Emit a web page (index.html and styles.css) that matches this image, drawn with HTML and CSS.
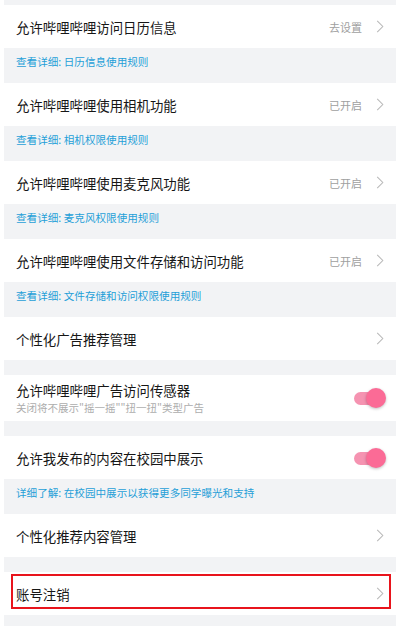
FILE: index.html
```html
<!DOCTYPE html>
<html lang="zh-CN">
<head>
    <meta charset="UTF-8">
    <meta name="viewport" content="width=device-width, initial-scale=1.0">
    <title>隐私权限设置</title>
    <link rel="stylesheet" href="styles.css">
</head>
<body>
    <div class="page">

        <div class="row">
            <span class="title">允许哔哩哔哩访问日历信息</span>
            <span class="status">去设置</span>
            <svg class="arrow" viewBox="0 0 8 14"><path d="M1 1 L7 7 L1 13"/></svg>
        </div>
        <div class="tip">查看详细: 日历信息使用规则</div>

        <div class="row">
            <span class="title">允许哔哩哔哩使用相机功能</span>
            <span class="status">已开启</span>
            <svg class="arrow" viewBox="0 0 8 14"><path d="M1 1 L7 7 L1 13"/></svg>
        </div>
        <div class="tip">查看详细: 相机权限使用规则</div>

        <div class="row">
            <span class="title">允许哔哩哔哩使用麦克风功能</span>
            <span class="status">已开启</span>
            <svg class="arrow" viewBox="0 0 8 14"><path d="M1 1 L7 7 L1 13"/></svg>
        </div>
        <div class="tip">查看详细: 麦克风权限使用规则</div>

        <div class="row">
            <span class="title">允许哔哩哔哩使用文件存储和访问功能</span>
            <span class="status">已开启</span>
            <svg class="arrow" viewBox="0 0 8 14"><path d="M1 1 L7 7 L1 13"/></svg>
        </div>
        <div class="tip">查看详细: 文件存储和访问权限使用规则</div>

        <div class="row">
            <span class="title">个性化广告推荐管理</span>
            <svg class="arrow" viewBox="0 0 8 14"><path d="M1 1 L7 7 L1 13"/></svg>
        </div>
        <div class="gap"></div>

        <div class="row row-tall">
            <div class="text">
                <span class="title">允许哔哩哔哩广告访问传感器</span>
                <span class="sub">关闭将不展示"摇一摇""扭一扭"类型广告</span>
            </div>
            <span class="switch"></span>
        </div>
        <div class="gap"></div>

        <div class="row">
            <span class="title">允许我发布的内容在校园中展示</span>
            <span class="switch"></span>
        </div>
        <div class="tip">详细了解: 在校园中展示以获得更多同学曝光和支持</div>

        <div class="row">
            <span class="title">个性化推荐内容管理</span>
            <svg class="arrow" viewBox="0 0 8 14"><path d="M1 1 L7 7 L1 13"/></svg>
        </div>
        <div class="gap"></div>

        <div class="row marked">
            <span class="title">账号注销</span>
            <svg class="arrow" viewBox="0 0 8 14"><path d="M1 1 L7 7 L1 13"/></svg>
            <span class="mark"></span>
        </div>

    </div>
</body>
</html>
```

FILE: styles.css
```css
body {
    margin: 0;
    background-color: #fff;
    font-family: "Noto Sans CJK SC", "Noto Sans", sans-serif;
}

.page {
    margin: 0 4px;
    padding: 5px 0 14px;
    background-color: #f2f3f5;
}

.row {
    display: flex;
    align-items: center;
    height: 43px;
    padding: 0 12px;
    background-color: #fff;
}

.row-tall {
    height: 46px;
}

.title {
    flex: 1;
    font-size: 13.4px;
    line-height: 18px;
    color: #161616;
}

.text {
    flex: 1;
    display: flex;
    flex-direction: column;
    gap: 2px;
}

.sub {
    font-size: 10.5px;
    line-height: 14px;
    color: #adadad;
}

.status {
    font-size: 11px;
    color: #a0a0a0;
    margin-right: 14px;
}

.arrow {
    width: 8px;
    height: 13px;
    fill: none;
    stroke: #b8b8b8;
    stroke-width: 1.1;
}

.tip {
    height: 35px;
    box-sizing: border-box;
    padding: 7px 12px 0;
    font-size: 10.6px;
    line-height: 14px;
    color: #1f9fd8;
}

.gap {
    height: 15px;
}

.switch {
    position: relative;
    width: 32px;
    height: 20px;
    margin-right: -2px;
}

.switch::before {
    content: "";
    position: absolute;
    left: 0;
    top: 4px;
    width: 28px;
    height: 13px;
    border-radius: 7px;
    background-color: #f593b1;
}

.switch::after {
    content: "";
    position: absolute;
    right: 0;
    top: 0;
    width: 20px;
    height: 20px;
    border-radius: 50%;
    background-color: #fb6b96;
    box-shadow: 0 1px 3px rgba(0, 0, 0, 0.25);
}

.marked {
    position: relative;
}

.mark {
    position: absolute;
    left: 7px;
    right: 5px;
    top: 2px;
    bottom: 6px;
    border: 2px solid #e8141c;
}
```
